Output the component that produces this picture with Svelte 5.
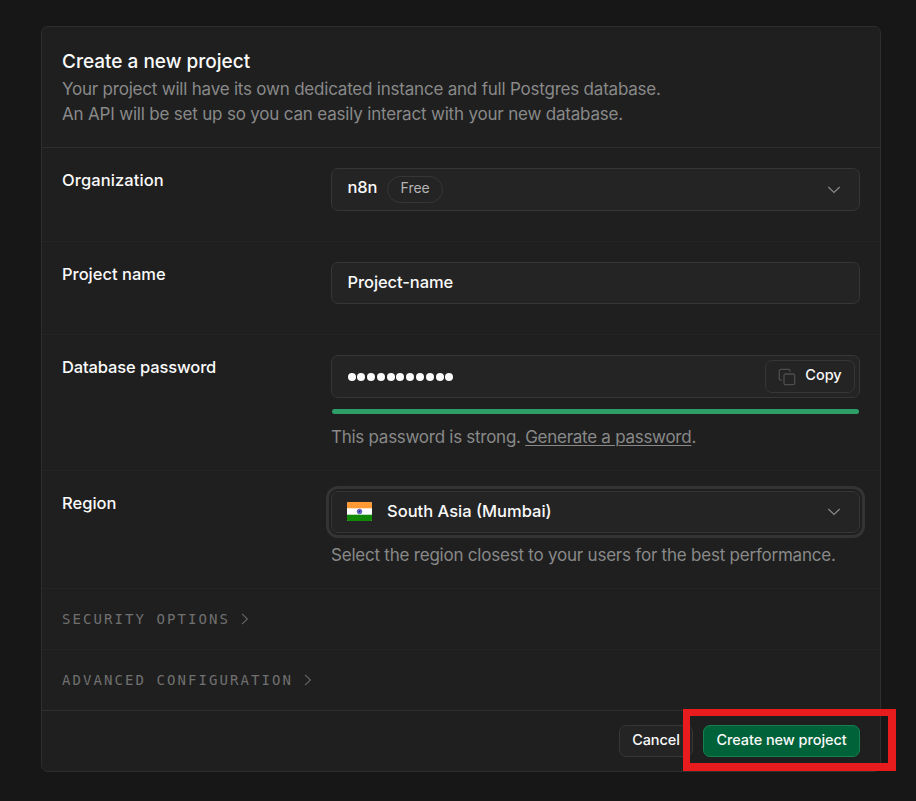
<script>
  const sections = ['Security options', 'Advanced configuration'];
  const password = 'password-11';
</script>

{#snippet chevronDown()}
  <svg class="chevron" width="14" height="14" viewBox="0 0 14 14" fill="none" stroke="currentColor" stroke-width="1.2">
    <path d="M1.3 4 L7 9.5 L12.7 4" />
  </svg>
{/snippet}

<main>
  <form class="card" onsubmit={(e) => e.preventDefault()}>
    <header>
      <h1>Create a new project</h1>
      <p>Your project will have its own dedicated instance and full Postgres database.</p>
      <p class="second">An API will be set up so you can easily interact with your new database.</p>
    </header>

    <section class="row org">
      <div class="label">Organization</div>
      <div class="content">
        <div class="field tall">
          <span class="value">n8n</span>
          <span class="pill"><span>Free</span></span>
          {@render chevronDown()}
        </div>
      </div>
    </section>

    <section class="row name">
      <div class="label">Project name</div>
      <div class="content">
        <div class="field"><span class="value">Project-name</span></div>
      </div>
    </section>

    <section class="row pass">
      <div class="label">Database password</div>
      <div class="content">
        <div class="field tall password">
          <div class="dots">{#each password as _}<i></i>{/each}</div>
          <button type="button" class="btn copy">
            <svg width="18" height="18" viewBox="0 0 18 18" fill="none" stroke="#4d4d4d" stroke-width="1.3" stroke-linejoin="round" stroke-linecap="round">
              <rect x="6" y="6" width="10.7" height="10.7" rx="1.6" />
              <path d="M3.2 12.2 H2.8 A1.5 1.5 0 0 1 1.3 10.7 V3 A1.6 1.6 0 0 1 2.9 1.4 H10.4 A1.5 1.5 0 0 1 12 2.9 V3.2" />
            </svg>
            <span>Copy</span>
          </button>
        </div>
        <div class="strength"></div>
        <p class="hint">This password is strong. <u>Generate a password</u>.</p>
      </div>
    </section>

    <section class="row region">
      <div class="label">Region</div>
      <div class="content">
        <div class="field focus">
          <svg class="flag" width="25" height="19" viewBox="0 0 25 19">
            <clipPath id="flag"><rect width="25" height="19" rx="1.5" /></clipPath>
            <g clip-path="url(#flag)">
              <rect width="25" height="19" fill="#fff" />
              <rect width="25" height="6.3" fill="#ff9933" />
              <rect y="12.7" width="25" height="6.3" fill="#128807" />
              <circle cx="12.5" cy="9.5" r="2.3" fill="#7777c8" stroke="#4444b0" stroke-width=".8" />
              <circle cx="12.5" cy="9.5" r="1" fill="#18188c" />
            </g>
          </svg>
          <span class="value">South Asia (Mumbai)</span>
          {@render chevronDown()}
        </div>
        <p class="hint">Select the region closest to your users for the best performance.</p>
      </div>
    </section>

    {#each sections as title}
      <section class="fold">
        <span>{title}</span>
        <svg width="8" height="12" viewBox="0 0 8 12" fill="none" stroke="#666" stroke-width="1.1">
          <path d="M1 .8 L6.4 6 L1 11.2" />
        </svg>
      </section>
    {/each}

    <footer>
      <button type="button" class="btn cancel"><span>Cancel</span></button>
      <button type="submit" class="btn primary"><span>Create new project</span></button>
      <div class="highlight"></div>
    </footer>
  </form>
</main>

<style>
  :global(body) {
    background: #171717;
  }
  main {
    box-sizing: border-box;
    width: 916px;
    height: 801px;
    padding: 26px 35px 0 41px;
    overflow: hidden;
    font-family: Inter, 'Liberation Sans', sans-serif;
    font-size: 17px;
    color: #fafafa;
    white-space: nowrap;
  }
  * {
    box-sizing: border-box;
  }
  h1, p {
    margin: 0;
    font-weight: 400;
  }
  .card {
    width: 840px;
    height: 746px;
    border: 1px solid #2e2e2e;
    border-radius: 7px;
    background: #1f1f1f;
  }
  header {
    height: 121px;
    padding: 22px 20px 0;
    border-bottom: 1px solid #2e2e2e;
  }
  h1 {
    font-size: 19px;
    font-weight: 500;
    line-height: 25px;
    margin-bottom: 3px;
  }
  header p {
    color: #898989;
    line-height: 25px;
    letter-spacing: -0.21px;
  }
  header .second { letter-spacing: -0.19px; }
  .row {
    display: flex;
    padding: 20px 20px 0;
    border-bottom: 1px solid #242424;
  }
  .org { height: 94px; }
  .name { height: 93px; }
  .pass { height: 136px; }
  .region { height: 118px; }
  .label {
    width: 269px;
    line-height: 24px;
    font-weight: 500;
    font-size: 16.5px;
  }
  .org .label { letter-spacing: 0.1px; }
  .pass .label { letter-spacing: -0.12px; }
  .content {
    width: 529px;
  }
  .field {
    display: flex;
    align-items: center;
    height: 42px;
    padding: 0 18px 0 15.5px;
    border: 1px solid #363636;
    border-radius: 7px;
    background: #242424;
  }
  .tall { height: 43px; }
  .value {
    font-weight: 500;
    font-size: 16.5px;
    line-height: 24px;
    margin-top: -3px;
  }
  .org .value {
    margin-top: -5px;
    letter-spacing: -0.2px;
  }
  .name .value { letter-spacing: -0.08px; }
  .chevron {
    margin-left: auto;
    color: #898989;
  }
  .pill {
    display: flex;
    align-items: center;
    justify-content: center;
    width: 56px;
    height: 27px;
    margin-left: 10px;
    border: 1px solid #363636;
    border-radius: 14px;
    font-size: 14px;
    color: #b4b4b4;
  }
  .pill span { margin-top: -4px; }
  .password { padding-right: 4px; }
  .dots {
    display: flex;
    gap: 1.8px;
  }
  .dots i {
    width: 8px;
    height: 8px;
    border-radius: 50%;
    background: #fafafa;
  }
  .btn {
    display: flex;
    align-items: center;
    justify-content: center;
    height: 32px;
    padding: 0;
    border: 1px solid #363636;
    border-radius: 7px;
    background: #242424;
    color: #fafafa;
    font: 500 14.5px Inter, 'Liberation Sans', sans-serif;
  }
  .copy {
    width: 90px;
    height: 33px;
    gap: 9px;
    margin-left: auto;
  }
  .copy span { margin-top: -4px; }
  .strength {
    height: 5px;
    margin: 11px 1px 0;
    border-radius: 3px;
    background: #2e9e69;
  }
  .hint {
    color: #898989;
    line-height: 24px;
    margin-top: 11px;
    letter-spacing: -0.27px;
  }
  u {
    text-decoration-thickness: 1px;
    text-underline-offset: 2px;
  }
  .region .field {
    padding-left: 15px;
    outline: 3px solid #343434;
    outline-offset: 2px;
  }
  .region .hint {
    margin-top: 10px;
    letter-spacing: -0.22px;
  }
  .flag {
    margin-right: 15px;
    margin-bottom: 2px;
  }
  .fold {
    display: flex;
    align-items: center;
    height: 61px;
    padding: 0 20px;
    border-bottom: 1px solid #242424;
    color: #707070;
    font: 14px 'DejaVu Sans Mono', monospace;
    letter-spacing: 2.07px;
    text-transform: uppercase;
  }
  .fold svg { margin-left: 11px; }
  .fold:nth-last-child(2) { border-bottom-color: #2e2e2e; }
  footer {
    position: relative;
    display: flex;
    justify-content: flex-end;
    gap: 10px;
    padding: 14px 20px 0;
  }
  .cancel { width: 74px; }
  .primary {
    width: 157px;
    border-color: #15804f;
    background: #006239;
  }
  footer span {
    margin-top: -4px;
    letter-spacing: -0.07px;
  }
  .highlight {
    position: absolute;
    left: 641px;
    top: -2px;
    width: 213px;
    height: 62px;
    border: 7px solid #e81c1c;
    border-right-width: 8px;
    border-bottom-width: 8px;
    pointer-events: none;
  }
</style>
